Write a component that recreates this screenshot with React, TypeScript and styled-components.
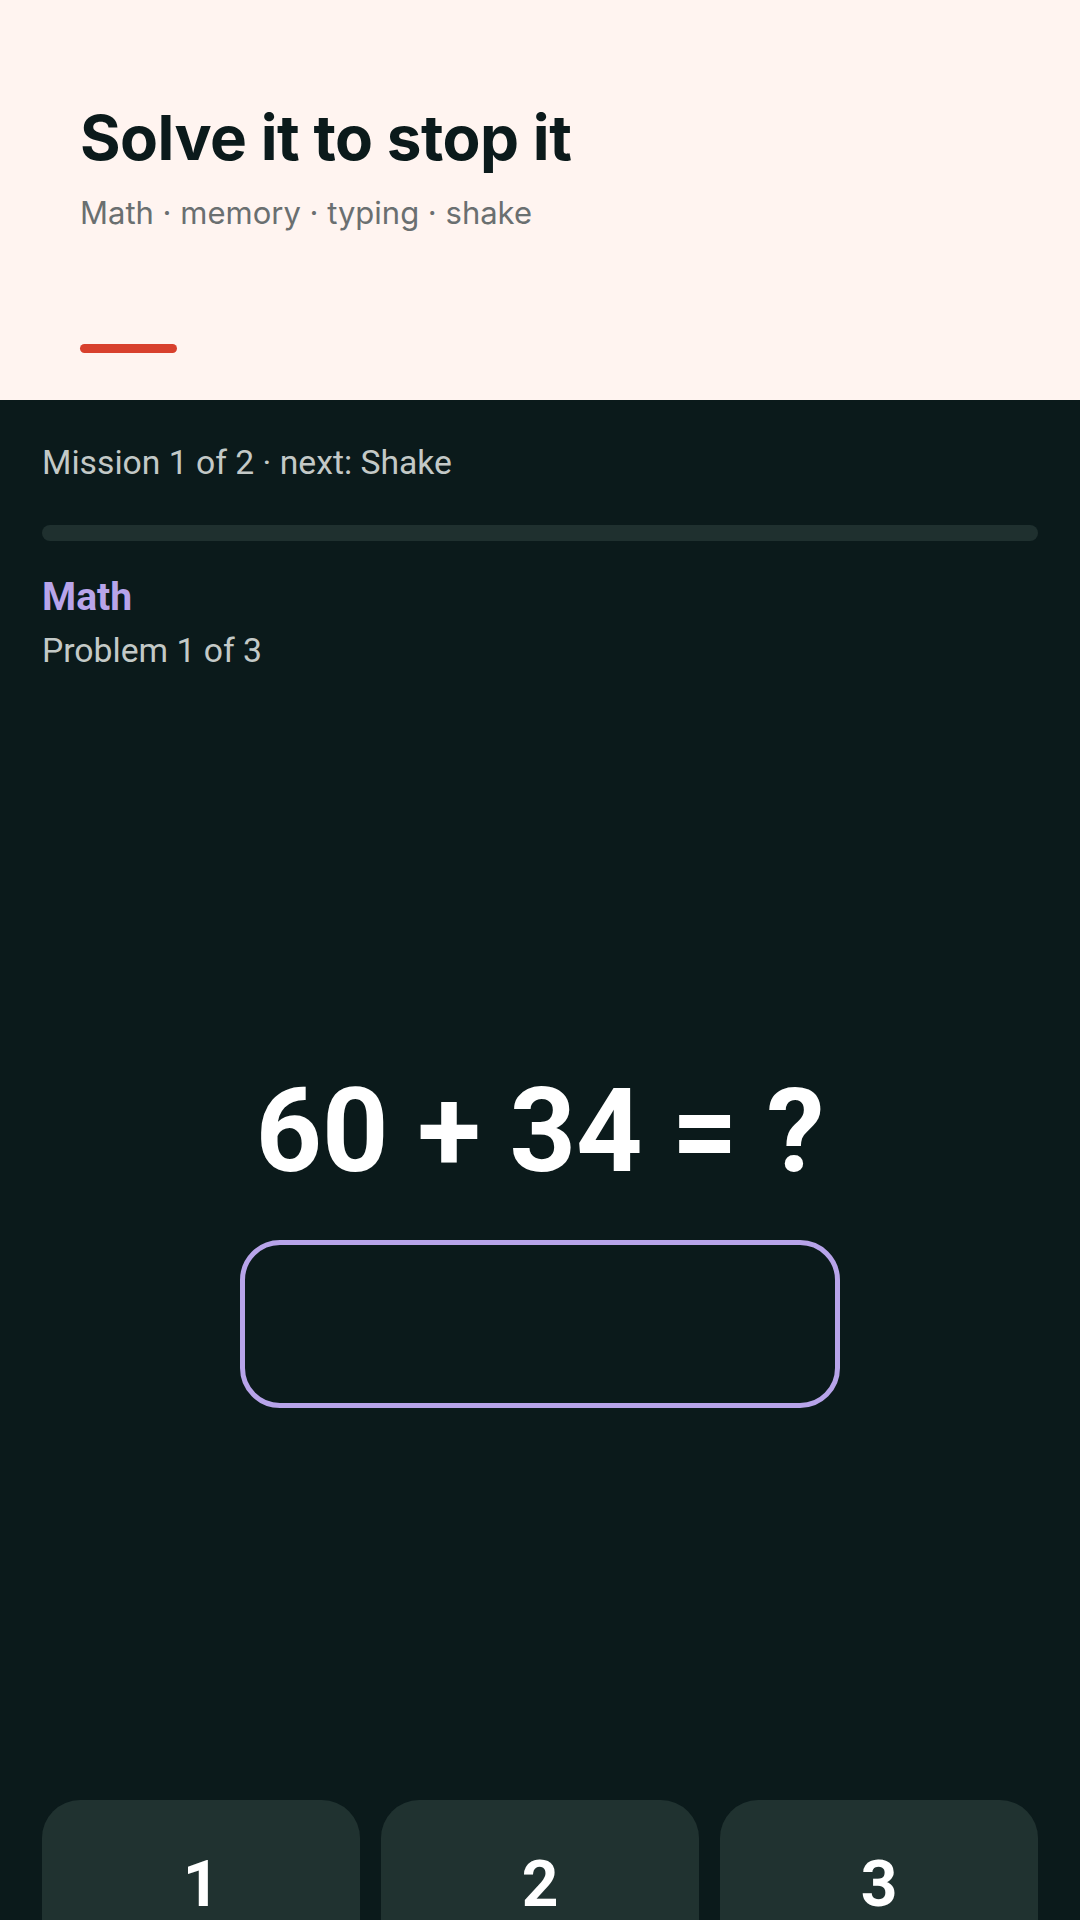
import React from "react";
import styled, { createGlobalStyle } from "styled-components";

const GlobalStyle = createGlobalStyle`
  html, body {
    margin: 0;
    padding: 0;
    background: #0b1a1b;
  }
  * { box-sizing: border-box; }
`;

const Screen = styled.div`
  width: 1080px;
  height: 1920px;
  overflow: hidden;
  display: flex;
  flex-direction: column;
  background: #0b1a1b;
`;

const Header = styled.header`
  flex-shrink: 0;
  background: #fff4f0;
  height: 400px;
  padding: 107px 80px 0 80px;
  display: flex;
  flex-direction: column;
`;

const Title = styled.h1`
  margin: 0;
  font-family: Inter, "Noto Sans", sans-serif;
  font-weight: 700;
  font-size: 62px;
  line-height: 1;
  letter-spacing: -0.5px;
  color: #0b1a1b;
`;

const Subtitle = styled.p`
  margin: 28px 0 0 0;
  font-family: Inter, "Noto Sans", sans-serif;
  font-weight: 400;
  font-size: 31px;
  line-height: 1;
  color: #6a6f70;
`;

const Accent = styled.div`
  margin-top: 116px;
  width: 97px;
  height: 9px;
  border-radius: 5px;
  background: #d8402d;
`;

const Body = styled.main`
  flex-shrink: 0;
  padding: 46px 42px 0 42px;
  display: flex;
  flex-direction: column;
  font-family: Roboto, "Noto Sans", sans-serif;
`;

const Caption = styled.div<{ $gap?: number }>`
  margin-top: ${(p) => p.$gap ?? 0}px;
  font-size: 33.7px;
  line-height: 1;
  color: #c3c9c7;
`;

const Track = styled.div`
  margin-top: 45px;
  height: 16px;
  border-radius: 8px;
  background: #1f302f;
  overflow: hidden;
`;

const Fill = styled.div`
  height: 100%;
  background: #b8a4ea;
  border-radius: 8px;
`;

const MissionName = styled.div`
  margin-top: 37px;
  font-size: 39px;
  font-weight: 700;
  line-height: 1;
  color: #b8a4ea;
`;

const Problem = styled.section`
  margin-top: 406px;
  display: flex;
  flex-direction: column;
  align-items: center;
`;

const Equation = styled.div`
  font-size: 116px;
  font-weight: 700;
  line-height: 1;
  color: #ffffff;
  white-space: pre;
`;

const AnswerBox = styled.div`
  margin-top: 51px;
  width: 600px;
  height: 168px;
  border: 5px solid #b8a4ea;
  border-radius: 40px;
  display: flex;
  align-items: center;
  justify-content: center;
  font-size: 80px;
  font-weight: 700;
  color: #ffffff;
`;

const Keypad = styled.div`
  margin-top: 392px;
  display: grid;
  grid-template-columns: repeat(3, 1fr);
  gap: 21px;
`;

const Key = styled.button`
  height: 170px;
  border: none;
  border-radius: 38px;
  background: #203230;
  color: #ffffff;
  font-family: Roboto, "Noto Sans", sans-serif;
  font-size: 64px;
  font-weight: 700;
  line-height: 1;
  display: flex;
  align-items: center;
  justify-content: center;
  padding: 0;
`;

const keys = ["1", "2", "3", "4", "5", "6", "7", "8", "9", "⌫", "0", "✓"];

export default function App() {
  const progress = 0;
  return (
    <>
      <GlobalStyle />
      <Screen>
        <Header>
          <Title>Solve it to stop it</Title>
          <Subtitle>Math · memory · typing · shake</Subtitle>
          <Accent />
        </Header>
        <Body>
          <Caption>Mission 1 of 2 · next: Shake</Caption>
          <Track>
            <Fill style={{ width: `${progress}%` }} />
          </Track>
          <MissionName>Math</MissionName>
          <Caption $gap={17}>Problem 1 of 3</Caption>
          <Problem>
            <Equation>60 + 34 = ?</Equation>
            <AnswerBox />
          </Problem>
          <Keypad>
            {keys.map((k) => (
              <Key key={k}>{k}</Key>
            ))}
          </Keypad>
        </Body>
      </Screen>
    </>
  );
}
